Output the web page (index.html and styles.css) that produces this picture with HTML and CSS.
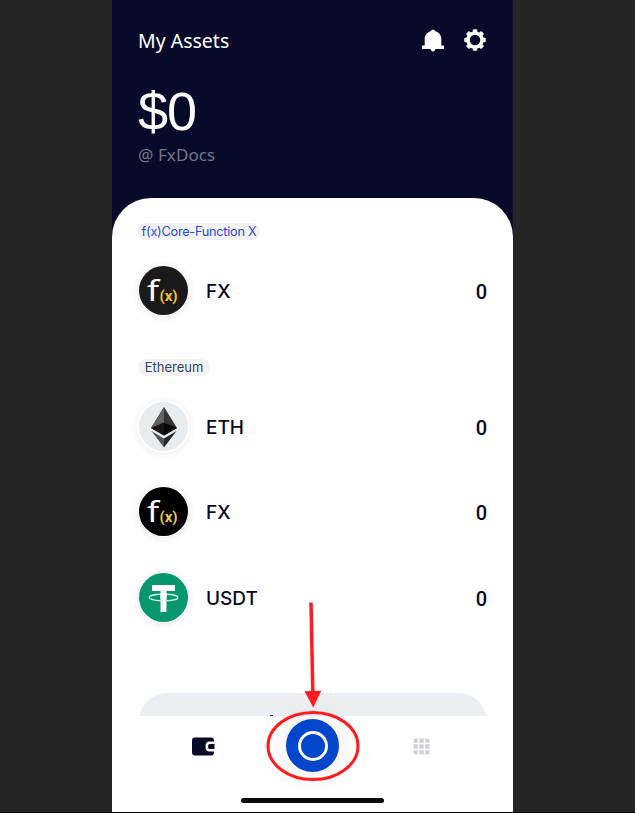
FILE: index.html
```html
<!DOCTYPE html>
<html lang="en">
<head>
<meta charset="utf-8">
<title>My Assets</title>
<link rel="stylesheet" href="styles.css">
</head>
<body>
<main class="phone">
  <header class="header">
    <div class="topbar">
      <h1 class="title">My Assets</h1>
      <div class="actions">
        <svg width="22" height="23" viewBox="0 0 22 23" fill="#fff"><path d="M8.500 2.200Q11-1.200 13.500 2.200Q19.300 4.500 19.300 10V16.500H22V20H13.500Q12.800 22.500 11 22.500T8.500 20H0V16.500H2.700V10Q2.700 4.500 8.500 2.200Z"/></svg>
        <svg width="22" height="22" viewBox="-11 -11 22 22"><g fill="#fff"><rect x="-2.200" y="-10.700" width="4.400" height="21.400" rx="1"/><rect x="-2.200" y="-10.700" width="4.400" height="21.400" rx="1" transform="rotate(45)"/><rect x="-2.200" y="-10.700" width="4.400" height="21.400" rx="1" transform="rotate(90)"/><rect x="-2.200" y="-10.700" width="4.400" height="21.400" rx="1" transform="rotate(135)"/></g><circle r="7" fill="#070b29" stroke="#fff" stroke-width="3.500"/></svg>
      </div>
    </div>
    <p class="balance">$0</p>
    <p class="account">@ FxDocs</p>
  </header>
  <section class="sheet">
    <span class="chip chip-core">f(x)Core-Function X</span>
    <div class="asset asset-core">
      <span class="coin coin-fx coin-dark"><span class="f">f</span><span class="x">(x)</span></span>
      <span class="name">FX</span><span class="amount">0</span>
    </div>
    <span class="chip chip-eth">Ethereum</span>
    <div class="asset">
      <span class="coin coin-eth"><svg width="49" height="49" viewBox="0 0 49 49"><path fill="#343434" d="M25 5L38 26 25 33.500 12 26Z"/><path fill="#636363" d="M25 5V20.500L12 26Z"/><path fill="#151515" d="M25 20.500V33.500L12 26Z"/><path fill="#080808" d="M25 20.500V33.500L38 26Z"/><path fill="#555" d="M12.500 29L25 36.500V45.500Z"/><path fill="#292929" d="M37.500 29L25 36.500V45.500Z"/></svg></span>
      <span class="name">ETH</span><span class="amount">0</span>
    </div>
    <div class="asset">
      <span class="coin coin-fx coin-black"><span class="f">f</span><span class="x">(x)</span></span>
      <span class="name">FX</span><span class="amount">0</span>
    </div>
    <div class="asset">
      <span class="coin coin-usdt"><svg width="49" height="49" viewBox="0 0 49 49"><path fill="#fff" d="M13 12H36V18H27.500V39H21.500V18H13Z"/><ellipse cx="24.500" cy="24.500" rx="14.300" ry="3.300" fill="none" stroke="#d9f2ea" stroke-width="1.200"/><path fill="#fff" d="M21.500 20H27.500V26.500H21.500Z"/></svg></span>
      <span class="name">USDT</span><span class="amount">0</span>
    </div>
    <div class="manage"><span class="speck"></span></div>
  </section>
  <nav class="nav">
    <div class="tabs">
      <svg class="wallet" width="23" height="19" viewBox="0 0 23 19"><path fill="#070b29" d="M3 .5H19Q22 .5 22 3.500V4.500H17.500Q13.500 4.500 13.500 9.500T17.500 14.500H22V15.500Q22 18.500 19 18.500H3Q0 18.500 0 15.500V3.500Q0 .5 3 .5Z"/><path fill="#070b29" d="M17.500 7H22.500V12H17.500Q16 12 16 9.500T17.500 7Z"/></svg>
      <span class="center-button"><span class="ring"></span></span>
      <svg class="grid" width="17" height="17" viewBox="0 0 17 17" fill="#d0d0d9"><path d="M2.500 .5H4.800V4.800H.5V2.500Q.5 .5 2.500 .5ZM6.300 .5H10.700V4.800H6.300ZM12.200 .5H14.500Q16.500 .5 16.500 2.500V4.800H12.200ZM.5 6.300H4.800V10.700H.5ZM6.300 6.300H10.700V10.700H6.300ZM12.200 6.300H16.500V10.700H12.200ZM.5 12.200H4.800V16.500H2.500Q.5 16.500 .5 14.500ZM6.300 12.200H10.700V16.500H6.300ZM12.200 12.200H16.500V14.500Q16.500 16.500 14.500 16.500H12.200Z"/></svg>
    </div>
    <div class="home-bar"></div>
  </nav>
  <svg class="callout" width="100" height="190" viewBox="0 0 100 190"><path d="M49 7.500L50.800 98" stroke="#ff1b1e" stroke-width="3.500"/><path fill="#ff1b1e" d="M42.500 96.300L59.300 95.700 51.200 112.500Z"/><ellipse cx="51" cy="151" rx="45" ry="33.500" fill="none" stroke="#ff1b1e" stroke-width="3"/></svg>
</main>
</body>
</html>
```
FILE: styles.css
```css
* { box-sizing: border-box; }
body { margin: 0; height: 813px; background: #252525; border-bottom: 1px solid #000; overflow: hidden; font-family: Inter, "Noto Sans", sans-serif; }
h1, p { margin: 0; font-weight: 400; }
.phone { position: relative; width: 401px; height: 812px; margin-left: 112px; background: #070b29; display: flex; flex-direction: column; overflow: hidden; }
.header { height: 198px; flex: none; padding: 26px 27px 0 26px; color: #fff; font-family: "Noto Sans", sans-serif; }
.topbar { display: flex; justify-content: space-between; align-items: center; height: 28px; }
.title { font-size: 19.5px; line-height: 28px; padding-top: 1px; }
.actions { display: flex; align-items: center; gap: 20px; }
.balance { font: 54px/60px "Liberation Sans", sans-serif; margin-top: 27px; letter-spacing: -1px; }
.account { font-size: 17px; line-height: 24px; margin-top: 2px; color: #747687; letter-spacing: .1px; }
.sheet { height: 518px; flex: none; background: #fff; border-radius: 39px 39px 0 0; padding: 25px 26px 0; display: flex; flex-direction: column; overflow: hidden; }
.chip { height: 17px; flex: none; align-self: flex-start; border-radius: 9px; background: #f2f2f3; font: 13px/17px Inter, sans-serif; white-space: nowrap; text-align: center; }
.chip-core { width: 122px; color: #254bd4; font-size: 12.7px; letter-spacing: -.24px; }
.chip-eth { width: 72px; color: #304669; }
.asset { height: 85.300px; flex: none; display: flex; align-items: center; color: #080b20; font-size: 19px; font-weight: 500; }
.asset-core { height: 101px; }
.chip-core + .asset-core { margin-bottom: 18px; }
.chip-eth + .asset { margin-top: 8px; }
.coin { width: 49px; height: 49px; margin-left: 1px; border-radius: 50%; display: flex; justify-content: center; box-shadow: 0 0 0 1px #fff, 0 1px 8px #0002; }
.coin-fx { font-family: "Noto Sans", sans-serif; align-items: baseline; line-height: 47px; padding-right: 1px; }
.coin-dark { background: #1a1a1a; }
.coin-black { background: #000; }
.f { color: #fff; font-size: 29px; font-weight: 400; transform: scaleX(1.2); }
.x { color: #f5c52c; font: 700 15px/47px Roboto, sans-serif; margin-left: 1px; }
.coin-black .x { color: #e8cd45; }
.coin-eth { background: #e8ecee; box-shadow: 0 0 0 2px #fff, 0 1px 9px #0002; }
.coin-usdt { background: #069771; }
.name { margin-left: 18px; padding-top: 2px; flex: 1; }
.amount { padding-top: 3px; font: 500 20px/24px Roboto, sans-serif; }
.manage { flex: none; width: 348px; height: 56px; margin: 53px 0 0 1px; border-radius: 28px; background: #ebeff2; }
.speck { display: block; width: 3px; height: 1px; margin: 22px 0 0 131px; background: #333; }
.nav { flex: 1; background: #fff; }
.tabs { height: 60px; display: flex; align-items: center; padding-left: 80px; }
.center-button { width: 53px; height: 53px; margin: 0 0 1px 71px; border-radius: 50%; background: #0346cc; display: flex; align-items: center; justify-content: center; box-shadow: 0 2px 24px 5px #0001; }
.ring { width: 30px; height: 30px; border: 3px solid #fff; border-radius: 50%; }
.grid { margin-left: 74px; }
.home-bar { width: 143px; height: 5px; margin: 22px 0 0 129px; border-radius: 3px; background: #080808; }
.callout { position: absolute; left: 150px; top: 595px; }
```
